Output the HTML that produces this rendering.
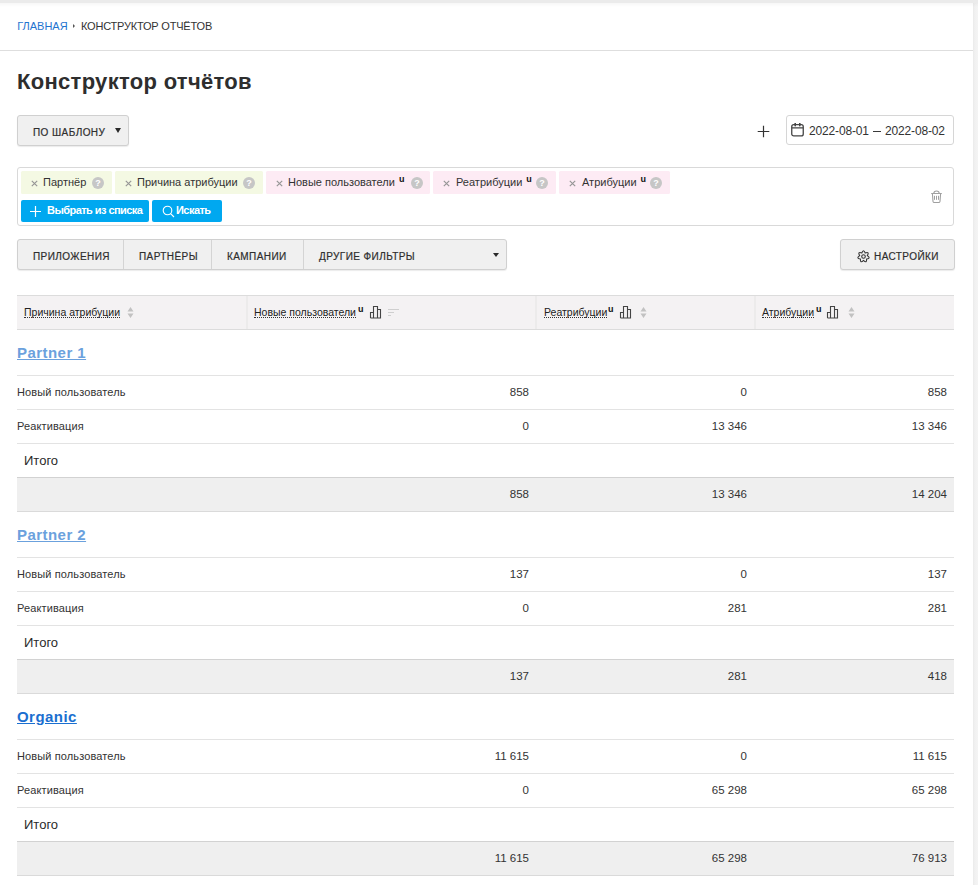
<!DOCTYPE html>
<html><head><meta charset="utf-8">
<style>
*{box-sizing:border-box;margin:0;padding:0}
html,body{width:978px;height:885px;overflow:hidden;background:#fff;font-family:"Liberation Sans",sans-serif;color:#333}
.a{position:absolute;white-space:nowrap}
#topstrip{position:absolute;left:0;top:0;width:978px;height:7px;background:linear-gradient(#ebebeb 0,#ebebeb 2.5px,rgba(0,0,0,0.03) 3px,rgba(0,0,0,0) 7px)}
#scroll{position:absolute;left:973px;top:3px;width:5px;height:882px;background:linear-gradient(90deg,#e9e9e9 0,#efefef 1px,#f2f2f2 3px,#f4f4f4 5px)}
#hr{position:absolute;left:0;top:50px;width:973px;height:1px;background:#dedede}
.crumb{font-size:11px;line-height:12px;letter-spacing:-0.2px;text-transform:uppercase}
.title{font-size:22px;font-weight:bold;line-height:24px;letter-spacing:0.3px;color:#2e2e2e}
.btn{position:absolute;background:#f0f0f0;border:1px solid #d0d0d0;border-radius:3px;box-shadow:0 1px 1px rgba(0,0,0,.08)}
.cap{font-size:10px;font-weight:normal;letter-spacing:0.42px;color:#2e2e2e;line-height:12px;-webkit-text-stroke:0.2px #2e2e2e}
.tri{position:absolute;width:0;height:0;border-left:3.5px solid transparent;border-right:3.5px solid transparent;border-top:5px solid #2a2a2a}
#date{position:absolute;left:786px;top:115px;width:168px;height:30px;border:1px solid #d6d6d6;border-radius:3px;background:#fff;overflow:hidden}
#fbox{position:absolute;left:17px;top:167px;width:937px;height:59px;border:1px solid #d9d9d9;border-radius:3px}
.chip{position:absolute;top:171px;height:23px;border-radius:1.5px}
.g{background:#f4f9e3}
.p{background:#fdebf4}
.xx{position:absolute;left:10px;top:9px}
.chip .t{position:absolute;top:0;font-size:11px;line-height:22px;color:#333}
.q{position:absolute;top:6px;width:12px;height:12px;border-radius:50%;background:#c6c6c6;color:#fff;font-size:9px;font-weight:bold;line-height:12px;text-align:center}
.sup{font-size:9px;font-weight:bold;position:relative;top:-4px;color:#111}
.hsup{position:absolute;font-size:9px;font-weight:bold;line-height:8px;color:#111}
.bb{position:absolute;top:200px;height:22px;background:#00a8f0;border-radius:2px;color:#fff}
.bb .t{position:absolute;top:-1px;font-size:11px;font-weight:bold;line-height:22px;letter-spacing:-0.55px}
#tabs{position:absolute;left:17px;top:239px;width:490px;height:31px;background:#f0f0f0;border:1px solid #d0d0d0;border-radius:3px;box-shadow:0 1px 1px rgba(0,0,0,.08)}
.div{position:absolute;top:0;width:1px;height:29px;background:#d4d4d4}
#thead{position:absolute;left:17px;top:295px;width:937px;height:35px;background:#f4f2f3;border-top:1px solid #dcdcdc;border-bottom:1px solid #dcdcdc}
.cdiv{position:absolute;top:0;width:2px;height:33px;background:#ecebeb}
.ht{position:absolute;font-size:10.5px;line-height:10px;color:#222;border-bottom:1px dotted #333}
.row{position:absolute;left:17px;width:937px;border-bottom:1px solid #e0e0e0}
.txt{position:absolute;font-size:11px;line-height:12px;color:#333;letter-spacing:0.12px}
.num{position:absolute;font-size:11.5px;line-height:12px;color:#333;text-align:right}
.hl{position:absolute;left:17px;width:937px;height:1px}
.tot{position:absolute;left:17px;width:937px;height:33px;background:#efefef}
.itogo{position:absolute;left:24px;font-size:13px;line-height:14px;color:#2a2a2a}
.plink{position:absolute;left:17px;font-size:15px;font-weight:bold;letter-spacing:0.45px;line-height:16px;text-decoration:underline}
</style></head><body>
<div id="scroll"></div>
<div id="topstrip"></div>

<div class="a crumb" style="left:17.2px;top:20px;color:#1f74cf;letter-spacing:0px">Главная</div>
<div class="a" style="left:73px;top:24px;width:0;height:0;border-top:2px solid transparent;border-bottom:2px solid transparent;border-left:2.5px solid #555"></div>
<div class="a crumb" style="left:81px;top:20px;color:#333">Конструктор отчётов</div>
<div id="hr"></div>

<div class="a title" style="left:17px;top:70px">Конструктор отчётов</div>

<div class="btn" style="left:17px;top:115px;width:112px;height:31px"></div>
<div class="a cap" style="left:33px;top:127px">ПО ШАБЛОНУ</div>
<div class="tri" style="left:114.5px;top:128px"></div>

<svg class="a" style="left:757px;top:125px" width="13" height="13" viewBox="0 0 13 13"><path d="M6.5 0.8V12.2M0.7 6.5H12.3" stroke="#333" stroke-width="1.2"/></svg>
<div id="date">
<svg class="a" style="left:4px;top:7px" width="14" height="14" viewBox="0 0 14 14"><rect x="0.75" y="1.7" width="11.5" height="11.2" rx="2" fill="none" stroke="#444" stroke-width="1.3"/><path d="M0.8 4.9H12.2" stroke="#444" stroke-width="1.4"/><path d="M4.2 0.3V2.8M8.8 0.3V2.8" stroke="#444" stroke-width="1.6" stroke-linecap="round"/></svg>
<div class="a" style="left:22px;top:8px;font-size:12px;line-height:14px;color:#333;letter-spacing:-0.15px">2022-08-01<span style="display:inline-block;width:8.6px;height:1.1px;background:#3a3a3a;margin:0 3.6px 0 3.9px;vertical-align:3px"></span>2022-08-02</div>
</div>

<div id="fbox"></div>
<div class="chip g" style="left:21px;width:91px"><svg class="xx" width="7" height="7" viewBox="0 0 7 7"><path d="M0.8 0.8L6.2 6.2M6.2 0.8L0.8 6.2" stroke="#959595" stroke-width="1.15"/></svg><span class="t" style="left:22px">Партнёр</span><span class="q" style="left:71px">?</span></div>
<div class="chip g" style="left:115px;width:148px"><svg class="xx" width="7" height="7" viewBox="0 0 7 7"><path d="M0.8 0.8L6.2 6.2M6.2 0.8L0.8 6.2" stroke="#959595" stroke-width="1.15"/></svg><span class="t" style="left:22px">Причина атрибуции</span><span class="q" style="left:128px">?</span></div>
<div class="chip p" style="left:266px;width:164px"><svg class="xx" width="7" height="7" viewBox="0 0 7 7"><path d="M0.8 0.8L6.2 6.2M6.2 0.8L0.8 6.2" stroke="#959595" stroke-width="1.15"/></svg><span class="t" style="left:22px">Новые пользователи <span class="sup" style="margin-left:1px">u</span></span><span class="q" style="left:145px">?</span></div>
<div class="chip p" style="left:433px;width:123px"><svg class="xx" width="7" height="7" viewBox="0 0 7 7"><path d="M0.8 0.8L6.2 6.2M6.2 0.8L0.8 6.2" stroke="#959595" stroke-width="1.15"/></svg><span class="t" style="left:23px">Реатрибуции <span class="sup" style="margin-left:1px">u</span></span><span class="q" style="left:103px">?</span></div>
<div class="chip p" style="left:559px;width:111px"><svg class="xx" width="7" height="7" viewBox="0 0 7 7"><path d="M0.8 0.8L6.2 6.2M6.2 0.8L0.8 6.2" stroke="#959595" stroke-width="1.15"/></svg><span class="t" style="left:23px">Атрибуции <span class="sup" style="margin-left:1px">u</span></span><span class="q" style="left:91px">?</span></div>

<div class="bb" style="left:21px;width:128px">
<svg class="a" style="left:8px;top:5px" width="13" height="13" viewBox="0 0 13 13"><path d="M6.5 1V12M1 6.5H12" stroke="#fff" stroke-width="1.2"/></svg>
<span class="t" style="left:26px">Выбрать из списка</span></div>
<div class="bb" style="left:152px;width:70px">
<svg class="a" style="left:10px;top:5px" width="13" height="13" viewBox="0 0 13 13"><circle cx="5.5" cy="5.5" r="4.3" fill="none" stroke="#fff" stroke-width="1.1"/><path d="M8.6 8.6L12 12" stroke="#fff" stroke-width="1.1"/></svg>
<span class="t" style="left:24px">Искать</span></div>

<svg class="a" style="left:930px;top:189px" width="13" height="15" viewBox="0 0 13 15"><path d="M1.2 4.5H11.8M3.8 4.4C3.8 1.1 9.2 1.1 9.2 4.4M2.4 4.8L3 12.4Q3.2 13.5 4.3 13.5H8.7Q9.8 13.5 10 12.4L10.6 4.8" fill="none" stroke="#a0a0a0" stroke-width="1.1"/><path d="M4.5 6.8V10.8M6.5 6.8V10.8M8.5 6.8V10.8" stroke="#a0a0a0" stroke-width="1"/></svg>

<div id="tabs">
<div class="div" style="left:105px"></div>
<div class="div" style="left:193px"></div>
<div class="div" style="left:284.5px;width:1.6px"></div>
</div>
<div class="a cap" style="left:33px;top:251px">ПРИЛОЖЕНИЯ</div>
<div class="a cap" style="left:139px;top:251px">ПАРТНЁРЫ</div>
<div class="a cap" style="left:227px;top:251px">КАМПАНИИ</div>
<div class="a cap" style="left:319px;top:251px">ДРУГИЕ ФИЛЬТРЫ</div>
<div class="tri" style="left:493px;top:252.7px;border-left-width:3.2px;border-right-width:3.2px;border-top-width:4.6px"></div>

<div class="btn" style="left:840px;top:239px;width:115px;height:31px"></div>
<svg class="a" style="left:856px;top:249px" width="15" height="15" viewBox="0 0 15 15"><path d="M5.81 3.99Q7.50 -0.50 9.19 3.99Q13.75 2.51 11.30 6.63Q15.30 9.28 10.55 9.93Q10.97 14.71 7.50 11.40Q4.03 14.71 4.45 9.93Q-0.30 9.28 3.70 6.63Q1.25 2.51 5.81 3.99Z" fill="none" stroke="#333" stroke-width="1.1" stroke-linejoin="round"/><circle cx="7.5" cy="7.5" r="1.8" fill="none" stroke="#333" stroke-width="1.1"/></svg>
<div class="a cap" style="left:874px;top:251px">НАСТРОЙКИ</div>

<div id="thead">
<div class="cdiv" style="left:229px"></div>
<div class="cdiv" style="left:518px"></div>
<div class="cdiv" style="left:737px"></div>
</div>
<div class="ht" style="left:24px;top:307px">Причина атрибуции</div>
<svg class="a" style="left:127px;top:306px" width="7" height="13" viewBox="0 0 7 13"><path d="M3.5 1L6.5 5.5H0.5Z M3.5 12L6.5 7.5H0.5Z" fill="#c2c2c2"/></svg>
<div class="ht" style="left:254px;top:307px">Новые пользователи</div><span class="hsup" style="left:358px;top:305px">u</span>
<svg class="a" style="left:369px;top:305px" width="13" height="14" viewBox="0 0 13 14"><path d="M1.5 13V7.5H4.5V13M4.5 13V1.5H8.5V13M8.5 13V4.5H11.5V13H1.5" fill="none" stroke="#444" stroke-width="1.1"/></svg>
<svg class="a" style="left:388px;top:308px" width="12" height="9" viewBox="0 0 12 9"><path d="M0 1.5H11M0 4.5H6M0 7.5H3" stroke="#cfcfcf" stroke-width="1"/></svg>
<div class="ht" style="left:544px;top:307px">Реатрибуции</div><span class="hsup" style="left:608px;top:305px">u</span>
<svg class="a" style="left:619px;top:305px" width="13" height="14" viewBox="0 0 13 14"><path d="M1.5 13V7.5H4.5V13M4.5 13V1.5H8.5V13M8.5 13V4.5H11.5V13H1.5" fill="none" stroke="#444" stroke-width="1.1"/></svg>
<svg class="a" style="left:640px;top:306px" width="7" height="13" viewBox="0 0 7 13"><path d="M3.5 1L6.5 5.5H0.5Z M3.5 12L6.5 7.5H0.5Z" fill="#c2c2c2"/></svg>
<div class="ht" style="left:762px;top:307px">Атрибуции</div><span class="hsup" style="left:816px;top:305px">u</span>
<svg class="a" style="left:826px;top:305px" width="13" height="14" viewBox="0 0 13 14"><path d="M1.5 13V7.5H4.5V13M4.5 13V1.5H8.5V13M8.5 13V4.5H11.5V13H1.5" fill="none" stroke="#444" stroke-width="1.1"/></svg>
<svg class="a" style="left:848px;top:306px" width="7" height="13" viewBox="0 0 7 13"><path d="M3.5 1L6.5 5.5H0.5Z M3.5 12L6.5 7.5H0.5Z" fill="#c2c2c2"/></svg>

<div id="body">
<div class="hl" style="top:375px;background:#e3e3e3"></div>
<div class="hl" style="top:409px;background:#e3e3e3"></div>
<div class="hl" style="top:443px;background:#e3e3e3"></div>
<div class="hl" style="top:477px;background:#d2d2d2"></div>
<div class="hl" style="top:511px;background:#dadada"></div>
<div class="tot" style="top:478px"></div>
<div class="plink" style="top:345px;color:#6ba1dd">Partner 1</div>
<div class="txt" style="left:17px;top:386px">Новый пользователь</div>
<div class="num" style="right:449px;top:386px">858</div>
<div class="num" style="right:231px;top:386px">0</div>
<div class="num" style="right:31px;top:386px">858</div>
<div class="txt" style="left:17px;top:420px">Реактивация</div>
<div class="num" style="right:449px;top:420px">0</div>
<div class="num" style="right:231px;top:420px">13 346</div>
<div class="num" style="right:31px;top:420px">13 346</div>
<div class="itogo" style="top:454px">Итого</div>
<div class="num" style="right:449px;top:488px">858</div>
<div class="num" style="right:231px;top:488px">13 346</div>
<div class="num" style="right:31px;top:488px">14 204</div>
<div class="hl" style="top:557px;background:#e3e3e3"></div>
<div class="hl" style="top:591px;background:#e3e3e3"></div>
<div class="hl" style="top:625px;background:#e3e3e3"></div>
<div class="hl" style="top:659px;background:#d2d2d2"></div>
<div class="hl" style="top:693px;background:#dadada"></div>
<div class="tot" style="top:660px"></div>
<div class="plink" style="top:527px;color:#6ba1dd">Partner 2</div>
<div class="txt" style="left:17px;top:568px">Новый пользователь</div>
<div class="num" style="right:449px;top:568px">137</div>
<div class="num" style="right:231px;top:568px">0</div>
<div class="num" style="right:31px;top:568px">137</div>
<div class="txt" style="left:17px;top:602px">Реактивация</div>
<div class="num" style="right:449px;top:602px">0</div>
<div class="num" style="right:231px;top:602px">281</div>
<div class="num" style="right:31px;top:602px">281</div>
<div class="itogo" style="top:636px">Итого</div>
<div class="num" style="right:449px;top:670px">137</div>
<div class="num" style="right:231px;top:670px">281</div>
<div class="num" style="right:31px;top:670px">418</div>
<div class="hl" style="top:739px;background:#e3e3e3"></div>
<div class="hl" style="top:773px;background:#e3e3e3"></div>
<div class="hl" style="top:807px;background:#e3e3e3"></div>
<div class="hl" style="top:841px;background:#d2d2d2"></div>
<div class="hl" style="top:875px;background:#dadada"></div>
<div class="tot" style="top:842px"></div>
<div class="plink" style="top:709px;color:#1a6fd0">Organic</div>
<div class="txt" style="left:17px;top:750px">Новый пользователь</div>
<div class="num" style="right:449px;top:750px">11 615</div>
<div class="num" style="right:231px;top:750px">0</div>
<div class="num" style="right:31px;top:750px">11 615</div>
<div class="txt" style="left:17px;top:784px">Реактивация</div>
<div class="num" style="right:449px;top:784px">0</div>
<div class="num" style="right:231px;top:784px">65 298</div>
<div class="num" style="right:31px;top:784px">65 298</div>
<div class="itogo" style="top:818px">Итого</div>
<div class="num" style="right:449px;top:852px">11 615</div>
<div class="num" style="right:231px;top:852px">65 298</div>
<div class="num" style="right:31px;top:852px">76 913</div>
</div><!--end-->
</body></html>
